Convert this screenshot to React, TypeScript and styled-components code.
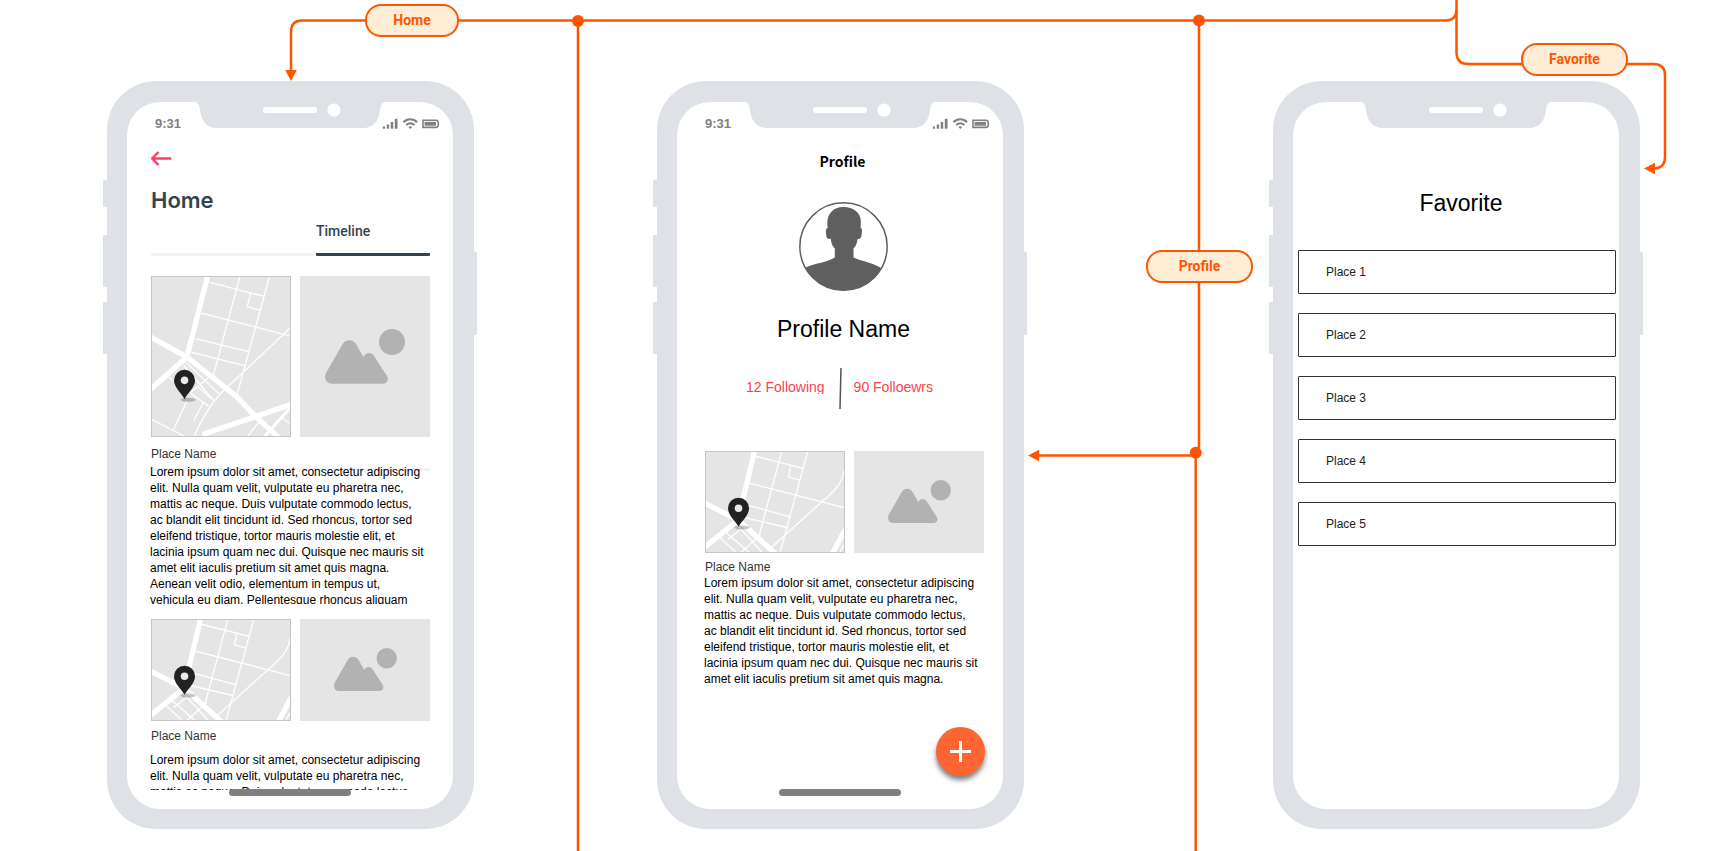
import React from 'react';
import styled, { createGlobalStyle } from 'styled-components';

const orange = '#ff5500';
const shell = '#dee1e6';
const slate = '#35434f';
const sans = '"Liberation Sans", Arial, sans-serif';

const GlobalStyle = createGlobalStyle`
  * { box-sizing: border-box; }
  body { margin: 0; background: #fff; font-family: ${sans}; color: #000; }
  h1, h2, h3, p, ul, figure { margin: 0; padding: 0; font-weight: 400; }
  button { border: 0; padding: 0; background: none; font: inherit; color: inherit; cursor: pointer; }
  svg { display: block; flex: none; }
`;

/* ---------- diagram canvas ---------- */

const Canvas = styled.main`
  position: relative;
  width: 100%;
  min-height: 100vh;
  overflow: hidden;
`;

const Wires = styled.svg`
  position: absolute;
  inset: 0;
  width: 100%;
  height: 100%;
  overflow: visible;
  fill: none;
  stroke: ${orange};
  stroke-width: 2.5;
`;

const Node = styled.div<{ $x: number; $y: number }>`
  position: absolute;
  left: ${p => p.$x}px;
  top: ${p => p.$y}px;
`;

const Tag = styled.button<{ $wide?: boolean }>`
  display: flex;
  align-items: center;
  justify-content: center;
  width: ${p => (p.$wide ? 107 : 94)}px;
  height: 33px;
  padding-bottom: 2px;
  border: 2px solid ${orange};
  border-radius: 16px;
  background: #ffedd5;
  color: ${orange};
  font: 700 14px/16px Roboto, sans-serif;
`;

/* ---------- phone ---------- */

const Shell = styled.section`
  position: relative;
  width: 367px;
  padding: 21px 21px 20px 20px;
  border-radius: 49px;
  background: ${shell};
`;

const SideKey = styled.span<{ $top: number; $height: number; $right?: boolean }>`
  position: absolute;
  top: ${p => p.$top}px;
  ${p => (p.$right ? 'right: -3px;' : 'left: -4px;')}
  width: 6px;
  height: ${p => p.$height}px;
  border-radius: 1px;
  background: ${shell};
`;

const Screen = styled.div`
  position: relative;
  display: flex;
  flex-direction: column;
  height: 707px;
  border-radius: 33px;
  background: #fff;
  overflow: hidden;
`;

const Notch = styled.svg`
  position: absolute;
  top: 0;
  left: 66px;
`;

const NotchParts = styled.svg`
  position: absolute;
  top: 22px;
  left: 156px;
`;

const Indicator = styled.span`
  position: absolute;
  left: 102px;
  bottom: 13px;
  width: 122px;
  height: 7px;
  border-radius: 4px;
  background: #808080;
`;

const StatusBar = styled.header`
  display: flex;
  justify-content: space-between;
  align-items: center;
  height: 16px;
  margin-top: 14px;
  padding: 0 13px 0 28px;
  color: #808080;
`;

const Clock = styled.time`
  font: 700 13px/16px ${sans};
`;

const StatusIcons = () => (
  <svg width="58" height="12" viewBox="0 0 58 12" fill="#808080" aria-hidden="true">
    <rect x="0.800" y="8.500" width="2.200" height="2.200" />
    <rect x="4.700" y="6.500" width="2.400" height="4.200" />
    <rect x="8.700" y="4" width="2.500" height="6.700" />
    <rect x="12.800" y="0.800" width="2.700" height="9.900" />
    <g fill="none" stroke="#808080" strokeWidth="2">
      <path d="M21.500 4.200 C25.300 0.200 31.300 0.200 35.100 4.200" />
      <path d="M24.200 7.200 C26.400 4.700 30.200 4.700 32.400 7.200" />
      <path d="M41 2.200 H54 C57.200 2.200 57.200 9.400 54 9.400 H41 Z" strokeWidth="1.600" />
    </g>
    <path d="M26.400 9 Q28.300 7.600 30.200 9 L28.300 11 Z" />
    <rect x="42.600" y="3.900" width="11.400" height="3.800" />
  </svg>
);

interface PhoneProps {
  label: string;
  status?: boolean;
  home?: boolean;
  children: React.ReactNode;
}

const Phone = ({ label, status, home, children }: PhoneProps) => (
  <Shell aria-label={label}>
    <SideKey $top={99} $height={27} />
    <SideKey $top={154} $height={52} />
    <SideKey $top={221} $height={52} />
    <SideKey $top={171} $height={83} $right />
    <Screen>
      {status && (
        <StatusBar>
          <Clock>9:31</Clock>
          <StatusIcons />
        </StatusBar>
      )}
      {children}
      <Notch width="194" height="26" viewBox="0 0 194 26" fill={shell} aria-hidden="true">
        <path d="M0 -1 C5 0 6.500 3 7 8 C8 18 13 26 24 26 H170 C181 26 186 18 187 8 C187.500 3 189 0 194 -1 Z" />
      </Notch>
      {home && <Indicator />}
    </Screen>
    <NotchParts width="78" height="14" viewBox="0 0 78 14" fill="#fff" aria-hidden="true">
      <rect y="4" width="54" height="6" rx="3" />
      <circle cx="71" cy="7" r="6.600" />
    </NotchParts>
  </Shell>
);

/* ---------- shared content ---------- */

const Body = styled.div<{ $left: number; $right: number }>`
  display: flex;
  flex-direction: column;
  padding: 0 ${p => p.$right}px 0 ${p => p.$left}px;
`;

const Media = styled.div<{ $height: number }>`
  display: grid;
  grid-template-columns: 140fr 130fr;
  column-gap: 9px;
  height: ${p => p.$height}px;
`;

const MapBox = styled.svg`
  width: 100%;
  height: 100%;
  border: 1px solid #c4c4c4;
  background: #e5e5e5;
`;

const Thumb = styled.figure`
  display: flex;
  align-items: center;
  justify-content: center;
  background: #e5e5e5;
`;

const PlaceName = styled.h3`
  font-size: 12px;
  line-height: 16px;
  color: #333;
`;

const Rule = styled.hr`
  width: 100%;
  height: 3px;
  margin: 6px 0 -7px;
  border: 0;
  background: #f1f2f6;
`;

const Copy = styled.p<{ $height?: number }>`
  position: relative;
  margin: 0 -4px 0 -1px;
  font-size: 12px;
  line-height: 16px;
  white-space: pre-line;
  ${p => (p.$height ? `height: ${p.$height}px;` : '')}
  overflow: hidden;
`;

const lorem = [
  'Lorem ipsum dolor sit amet, consectetur adipiscing',
  'elit. Nulla quam velit, vulputate eu pharetra nec,',
  'mattis ac neque. Duis vulputate commodo lectus,',
  'ac blandit elit tincidunt id. Sed rhoncus, tortor sed',
  'eleifend tristique, tortor mauris molestie elit, et',
  'lacinia ipsum quam nec dui. Quisque nec mauris sit',
  'amet elit iaculis pretium sit amet quis magna.',
  'Aenean velit odio, elementum in tempus ut,',
  'vehicula eu diam. Pellentesque rhoncus aliquam',
];

const excerpt = (lines: number) => lorem.slice(0, lines).join('\n');

const largeMap = {
  height: 483,
  major: 'M170 -5 L106 243 M-5 182 L106 243 L-5 342 M106 243 L256 362 L316 424 L390 492 M160 476 L316 424 L425 386',
  wide: 'M420 398 L340 487',
  minor:
    'M176 16 L341 59 M151 110 L420 179 M132 187 L294 227 M121 229 L281 269 M267 0 L186 302 M357 0 L258 362 M300 50 L290 90 L329 101 M420 155 L206 357 Q160 410 129 483 M101 257 L206 357 M96 268 L188 375 M116 352 L173 393 M171 307 L116 352 M140 335 L188 375 M46 300 L66 316 M156 382 L126 438 M106 377 L66 462 M0 433 L98 483 M326 440 L292 483 M393 427 L420 444',
  pin: 314,
};

const smallMap = {
  height: 306,
  major: 'M148 -5 L98 208 M-5 156 L98 208 L-5 292 M98 208 L212 312 M422 240 L384 312',
  wide: '',
  minor:
    'M151 13 L296 50 M230 0 L161 258 M309 0 L226 306 M258 41 L251 76 L286 86 M132 95 L420 170 M128 163 L254 198 M119 201 L246 231 M420 55 C414 110 370 135 322 180 L198 293 M96 225 L170 306 M61 246 L130 306 M44 263 L90 306 M166 253 L108 306 M104 238 L66 268 M420 284 L408 306',
  pin: 172,
};

const PlaceMap = ({ small }: { small?: boolean }) => {
  const m = small ? smallMap : largeMap;
  return (
    <MapBox viewBox={`0 0 420 ${m.height}`} preserveAspectRatio="none" fill="none" stroke="#fff" role="img" aria-label="Map">
      <path d={m.minor} strokeWidth="4" />
      <path d={m.wide} strokeWidth="9" />
      <path d={m.major} strokeWidth="16" strokeLinecap="round" />
      <g transform={`translate(99 ${m.pin})`} stroke="none">
        <ellipse cx="11" cy="59" rx="23" ry="6" fill="#000" opacity="0.22" />
        <path d="M0 57 C-10 38 -32 22 -32 0 A32 32 0 0 1 32 0 C32 22 10 38 0 57 Z" fill="#222" />
        <circle r="11.500" fill="#e9e9e9" />
      </g>
    </MapBox>
  );
};

const PictureIcon = ({ width }: { width: number }) => (
  <svg width={width} viewBox="0 0 240 164" fill="#b2b2b2" role="img" aria-label="Picture">
    <path d="M20 164 C3 164 -5 146 4 130 L50 50 C60 28 85 28 96 50 L115 84 C123 68 141 68 149 84 L184 138 C194 152 185 164 172 164 Z" />
    <circle cx="201" cy="39" r="39" />
  </svg>
);

const MediaRow = ({ small }: { small?: boolean }) => (
  <Media $height={small ? 102 : 161}>
    <PlaceMap small={small} />
    <Thumb>
      <PictureIcon width={small ? 63 : 80} />
    </Thumb>
  </Media>
);

/* ---------- home ---------- */

const BackButton = styled.button`
  width: 21px;
  height: 15px;
  margin-top: 19px;
`;

const HomeTitle = styled.h1`
  margin-top: 21px;
  font: 600 22px/26px Inter, sans-serif;
  color: ${slate};
`;

const Tabs = styled.div`
  display: grid;
  grid-template-columns: 165fr 114fr;
  margin-top: 9px;
`;

const Tab = styled.button<{ $active?: boolean }>`
  height: 34px;
  padding-bottom: 13px;
  border-bottom: 3px solid ${p => (p.$active ? slate : '#f2f2f2')};
  border-radius: 1px;
  text-align: left;
  color: ${slate};
  font: 500 14px/16px Roboto, sans-serif;
`;

const Entry = styled.article<{ $top: number; $nameTop: number }>`
  display: flex;
  flex-direction: column;
  margin-top: ${p => p.$top}px;

  ${PlaceName} { margin-top: ${p => p.$nameTop}px; }
`;

const LooseName = styled(PlaceName)`
  margin-bottom: 8px;
`;

const HomePhone = () => (
  <Phone label="Home" status home>
    <Body $left={24} $right={23}>
      <BackButton aria-label="Back">
        <svg width="21" height="15" viewBox="0 0 21 15" fill="none" stroke="#ff3d68" strokeWidth="2.500">
          <path d="M7.500 1 L1.200 7.500 L7.500 14 M1.200 7.500 H20.200" />
        </svg>
      </BackButton>
      <HomeTitle>Home</HomeTitle>
      <Tabs>
        <Tab aria-label="Overview" />
        <Tab $active>Timeline</Tab>
      </Tabs>
      <Entry $top={20} $nameTop={9}>
        <MediaRow />
        <PlaceName>Place Name</PlaceName>
        <Rule />
        <Copy $height={140}>{excerpt(9)}</Copy>
      </Entry>
      <Entry $top={15} $nameTop={7}>
        <MediaRow small />
        <LooseName>Place Name</LooseName>
        <Copy $height={38}>{excerpt(3)}</Copy>
      </Entry>
    </Body>
  </Phone>
);

/* ---------- profile ---------- */

const ProfileHeading = styled.h2`
  margin: 19px 4px 0 0;
  text-align: center;
  font: 700 14px/20px "Noto Sans CJK SC", "Noto Sans", sans-serif;
`;

const Avatar = styled.svg`
  align-self: center;
  margin: 31px 2px 0 0;
`;

const ScreenTitle = styled.h1`
  text-align: center;
  font-size: 23px;
  line-height: 28px;
`;

const ProfileName = styled(ScreenTitle)`
  margin: 24px 2px 0 0;
`;

const Stats = styled.div`
  display: flex;
  align-items: center;
  justify-content: center;
  gap: 12px;
  height: 42px;
  margin: 25px 10px 41px 0;
`;

const Stat = styled.a`
  height: 16px;
  margin-top: -6px;
  overflow: hidden;
  color: #fb3f4f;
  font-size: 14px;
  line-height: 18px;
  text-decoration: none;

  &:first-child { margin-right: 2px; }
`;

const AddButton = styled.button`
  display: grid;
  place-items: center;
  position: absolute;
  right: 18px;
  bottom: 33px;
  width: 49px;
  height: 49px;
  border-radius: 50%;
  background: #ff6433;
  box-shadow: 0 4px 5px rgba(0, 0, 0, 0.5);
`;

const ProfilePhone = () => (
  <Phone label="Profile" status home>
    <Body $left={28} $right={19}>
      <ProfileHeading>Profile</ProfileHeading>
      <Avatar width="89" height="89" viewBox="0 0 266 266" role="img" aria-label="Profile picture">
        <clipPath id="avatar-clip">
          <circle cx="133" cy="133" r="131" />
        </clipPath>
        <path
          clipPath="url(#avatar-clip)"
          fill="#5f5f5f"
          d="M133 15 C158 14 186 30 185 60 L184 77 C191 79 188 92 186 104 C184 111 178 110 175 111 C173 124 170 132 163 139 V166 C190 178 225 183 250 200 L250 266 H16 V198 C42 183 82 182 107 166 V139 C99 132 96 122 95 110 C88 111 84 110 82 103 C80 91 78 80 86 77 C85 70 84 64 85 56 C88 30 108 14 133 15 Z"
        />
        <circle cx="133" cy="133" r="130.500" fill="none" stroke="#5f5f5f" strokeWidth="4.500" />
      </Avatar>
      <ProfileName>Profile Name</ProfileName>
      <Stats>
        <Stat href="#following">12 Following</Stat>
        <svg width="3" height="42" viewBox="0 0 3 42" stroke="#555" strokeWidth="1.500" aria-hidden="true">
          <path d="M2 0 L1 41" />
        </svg>
        <Stat href="#followers">90 Folloewrs</Stat>
      </Stats>
      <Entry $top={0} $nameTop={6}>
        <MediaRow small />
        <PlaceName>Place Name</PlaceName>
        <Copy>{excerpt(7)}</Copy>
      </Entry>
    </Body>
    <AddButton aria-label="Add">
      <svg width="21" height="21" viewBox="0 0 21 21" stroke="#fff" strokeWidth="3">
        <path d="M10.500 0 V21 M0 10.500 H21" />
      </svg>
    </AddButton>
  </Phone>
);

/* ---------- favorite ---------- */

const FavoriteTitle = styled(ScreenTitle)`
  margin-top: 87px;
  padding-left: 8px;
`;

const PlaceList = styled.ul`
  display: flex;
  flex-direction: column;
  gap: 19px;
  margin-top: 33px;
  list-style: none;
`;

const PlaceItem = styled.li`
  display: flex;
  align-items: center;
  height: 44px;
  padding-left: 27px;
  border: 1px solid #333;
  border-radius: 1px;
  color: #222;
  font-size: 12px;
  line-height: 16px;
`;

const places = ['Place 1', 'Place 2', 'Place 3', 'Place 4', 'Place 5'];

const FavoritePhone = () => (
  <Phone label="Favorite">
    <Body $left={5} $right={3}>
      <FavoriteTitle>Favorite</FavoriteTitle>
      <PlaceList>
        {places.map(place => (
          <PlaceItem key={place}>{place}</PlaceItem>
        ))}
      </PlaceList>
    </Body>
  </Phone>
);

/* ---------- page ---------- */

const Connectors = () => (
  <Wires aria-hidden="true">
    <path d="M291 72 V32 Q291 20.500 302 20.500 H1445 Q1456.500 20.500 1456.500 10" />
    <path d="M1456.500 0 V52 Q1456.500 64 1468 64 H1653 Q1665 64 1665 75 V157 Q1665 168.500 1653 168.500" />
    <line x1="578" y1="21" x2="578" y2="100%" />
    <path d="M1199 20 V445 Q1199 455.500 1190 455.500 H1037" />
    <line x1="1195.700" y1="453" x2="1195.700" y2="100%" />
    <g fill={orange} stroke="none">
      <circle cx="578" cy="21" r="6" />
      <circle cx="1199" cy="20.500" r="6" />
      <circle cx="1195.700" cy="452.700" r="6" />
      <path d="M285.200 70 H296.800 L291 81 Z" />
      <path d="M1655 162.700 V174.300 L1644 168.500 Z" />
      <path d="M1039.200 449.700 V461.300 L1028 455.500 Z" />
    </g>
  </Wires>
);

export default function App() {
  return (
    <>
      <GlobalStyle />
      <Canvas>
        <Connectors />
        <Node $x={107} $y={81}>
          <HomePhone />
        </Node>
        <Node $x={657} $y={81}>
          <ProfilePhone />
        </Node>
        <Node $x={1273} $y={81}>
          <FavoritePhone />
        </Node>
        <Node $x={365} $y={4}>
          <Tag>Home</Tag>
        </Node>
        <Node $x={1146} $y={250}>
          <Tag $wide>Profile</Tag>
        </Node>
        <Node $x={1521} $y={43}>
          <Tag $wide>Favorite</Tag>
        </Node>
      </Canvas>
    </>
  );
}
